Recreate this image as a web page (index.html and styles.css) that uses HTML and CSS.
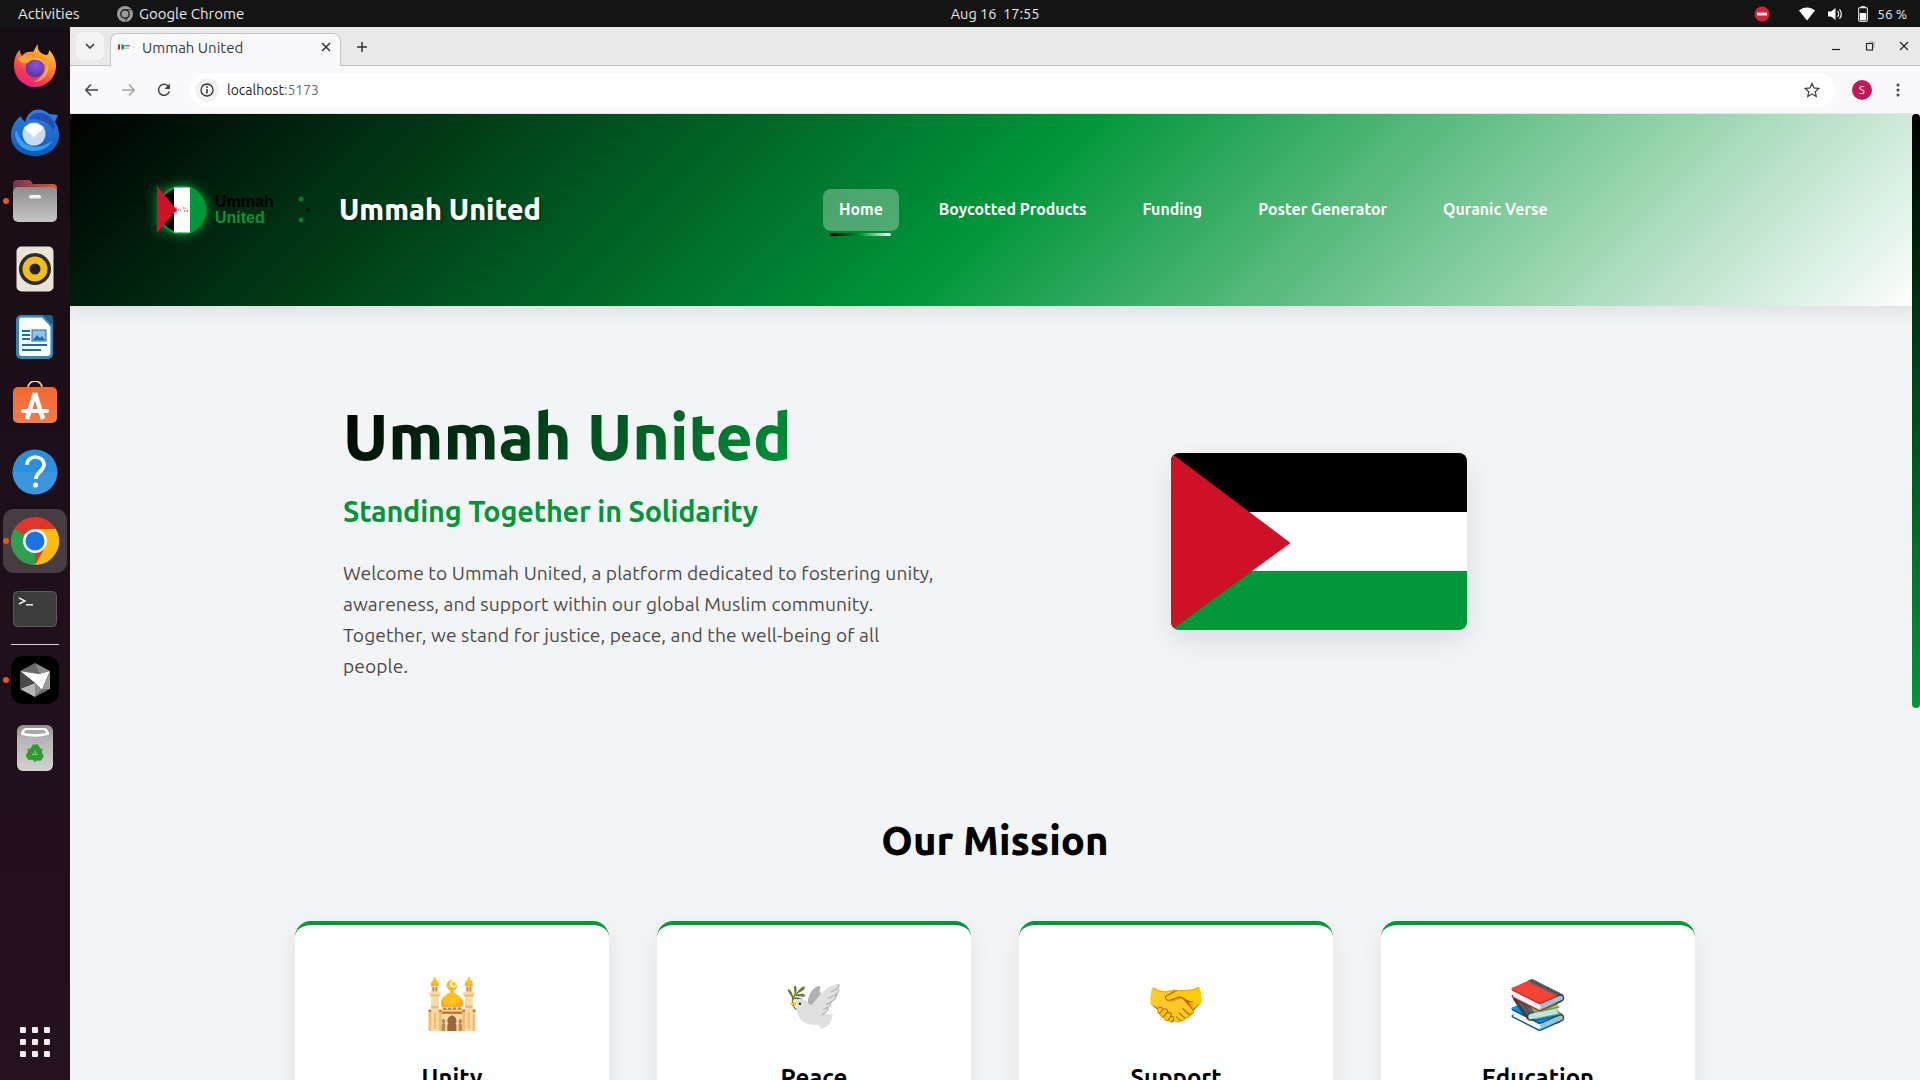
FILE: index.html
```html
<!DOCTYPE html>
<html lang="en">
<head>
<meta charset="utf-8">
<title>Ummah United</title>
<link rel="stylesheet" href="styles.css">
</head>
<body>
<div class="topbar">
  <span class="activities">Activities</span>
  <span class="appname">
    <svg width="16" height="16" viewBox="0 0 16 16"><circle cx="8" cy="8" r="8" fill="#9b9b9b"/><circle cx="8" cy="8" r="4.2" fill="none" stroke="#222" stroke-width="1.4"/><path d="M8 3.8h6.6M11.6 10.4 8 15.8" stroke="#222" stroke-width=".9"/></svg>
    Google Chrome
  </span>
  <span class="clock">Aug 16&nbsp;&nbsp;17:55</span>
  <div class="status">
    <svg class="st-dnd" width="16" height="16" viewBox="0 0 16 16"><circle cx="8" cy="8" r="7.5" fill="#e01b3c"/><rect x="3" y="6.6" width="10" height="2.8" fill="#fff"/></svg>
    <svg class="st-wifi" width="16" height="14" viewBox="0 0 16 14"><path d="M0 3.6C4.5-.6 11.500-.6 16 3.6L8 13.500Z" fill="#fff"/></svg>
    <svg class="st-vol" width="15" height="14" viewBox="0 0 15 14"><path d="M0 4.500h3L7.500 1v12L3 9.500H0Z" fill="#fff"/><path d="M9.500 4.200a4 4 0 0 1 0 5.600M11.500 2.300a7 7 0 0 1 0 9.400" fill="none" stroke="#fff" stroke-width="1.200"/></svg>
    <svg class="st-bat" width="10" height="16" viewBox="0 0 10 16"><rect x=".6" y="1.600" width="8.800" height="13.800" rx="1.500" fill="none" stroke="#ddd" stroke-width="1.100"/><rect x="3" y="0" width="4" height="1.600" fill="#ddd"/><rect x="1.800" y="7" width="6.400" height="7.200" fill="#fff"/></svg>
    <span class="st-text">56 %</span>
  </div>
</div>

<div class="desktop">
  <nav class="dock">
    <div class="dock-item">
      <svg width="42" height="43" viewBox="0 0 42 43">
        <defs>
          <linearGradient id="ff" x1="0.85" y1="0" x2="0.3" y2="1"><stop offset="0" stop-color="#ffe03a"/><stop offset=".4" stop-color="#ff8f2a"/><stop offset=".75" stop-color="#f9394f"/><stop offset="1" stop-color="#e81f86"/></linearGradient>
          <radialGradient id="ffp" cx=".55" cy=".35" r=".8"><stop offset="0" stop-color="#8f55d8"/><stop offset="1" stop-color="#4a2ba0"/></radialGradient>
        </defs>
        <path d="M24 0C23 5 25 8 29 10 34 13 35 9 35 6 39 10 42 15 42 22A21 21 0 0 1 0 22C0 15 2 9 6 6 6 9 7 11 8 12 10 8 15 7 19 8 21 5 22 2 24 0Z" fill="url(#ff)"/>
        <path d="M33 16C38 27 30 39 19 38 28 35 33 27 33 16Z" fill="#ffc24a" opacity=".75"/>
        <circle cx="21" cy="24" r="9.500" fill="url(#ffp)"/>
        <path d="M12 20C15 12 27 11 32 21 27 16 22 15 18 16 16 17 14 18 12 20Z" fill="#ffb13c"/>
        <path d="M4 15C9 10 14 10 19 13 16 15 15 18 12 19 8 20 6 18 4 15Z" fill="#ffa436"/>
      </svg>
    </div>
    <div class="dock-item">
      <svg width="50" height="48" viewBox="0 0 50 48">
        <defs><linearGradient id="tb" x1="0" y1="0" x2="0" y2="1"><stop offset="0" stop-color="#2f7fe0"/><stop offset="1" stop-color="#0a5cbc"/></linearGradient></defs>
        <path d="M11 7C3 13 1 20 1 27c0 11 10 20 24 20s24-9 24-21c0-5-1-9-4-13l3-7-9-1C34 0 26-1 21 3c-3 2-5 6-6 10C13 11 11 9 11 7Z" fill="url(#tb)"/>
        <path d="M19 11c1-5 7-8 13-7 6 1 10 5 12 10 1 3 1 6 0 9-3-7-9-11-15-12-4-1-7-1-10 0Z" fill="#2350b5"/>
        <path d="M5 24c0 10 8 18 19 18 8 0 15-4 19-11-7 6-15 8-22 6-7-2-12-7-14-15-1 0-2 1-2 2Z" fill="#3e9cf0"/>
        <circle cx="24" cy="25" r="11.500" fill="#c6daf3"/>
        <path d="M14 19c5-5.500 15-5.500 20 0L24 28Z" fill="#fff"/>
      </svg>
    </div>
    <div class="dock-item running">
      <svg width="46" height="42" viewBox="0 0 46 42">
        <defs>
          <linearGradient id="fold" x1="0" y1="0" x2="1" y2="0"><stop offset="0" stop-color="#7b2f55"/><stop offset="1" stop-color="#e95420"/></linearGradient>
          <linearGradient id="foldb" x1="0" y1="0" x2="0" y2="1"><stop offset="0" stop-color="#8e8e8e"/><stop offset="1" stop-color="#c6c6c6"/></linearGradient>
        </defs>
        <path d="M1 4a4 4 0 0 1 4-4h11a4 4 0 0 1 4 3l1 1h20a4 4 0 0 1 4 4v8H1Z" fill="url(#fold)"/>
        <rect x="1" y="7" width="44" height="35" rx="5" fill="url(#foldb)"/>
        <rect x="17" y="15" width="12" height="3.500" rx="1.500" fill="#f2f2f2"/>
      </svg>
    </div>
    <div class="dock-item">
      <svg width="38" height="46" viewBox="0 0 38 46">
        <rect x=".5" y=".5" width="37" height="45" rx="5" fill="#e8e4d8"/>
        <circle cx="19" cy="23" r="16" fill="#2c2c2c"/>
        <circle cx="19" cy="23" r="12.500" fill="#f2bd1d"/>
        <circle cx="19" cy="23" r="5.500" fill="#222"/>
      </svg>
    </div>
    <div class="dock-item">
      <svg width="38" height="46" viewBox="0 0 38 46">
        <path d="M5 1h22l10 10v29a5 5 0 0 1-5 5H5a5 5 0 0 1-5-5V6a5 5 0 0 1 5-5Z" fill="#2f87b5"/>
        <path d="M5 3.500h21l8.500 9V39a3 3 0 0 1-3 3H6a3 3 0 0 1-3-3V6a2.500 2.500 0 0 1 2-2.500Z" fill="#fff"/>
        <path d="M27 1h7a3 3 0 0 1 3 3v7Z" fill="#1a5f8f"/>
        <rect x="6" y="16" width="8" height="2" fill="#1a6ea8"/><rect x="6" y="20" width="8" height="2" fill="#1a6ea8"/><rect x="6" y="24" width="8" height="2" fill="#1a6ea8"/>
        <rect x="16" y="16" width="14" height="11" fill="#8cc4e8" stroke="#1a6ea8"/>
        <path d="M17 26l4-5 3 3 2-2 3 4Z" fill="#1a6ea8"/>
        <rect x="6" y="30" width="25" height="2" fill="#1a6ea8"/><rect x="6" y="35" width="19" height="2" fill="#1a6ea8"/>
      </svg>
    </div>
    <div class="dock-item">
      <svg class="icon-store" width="44" height="42" viewBox="0 0 44 42">
        <defs><linearGradient id="store" x1="0" y1="0" x2="0" y2="1"><stop offset="0" stop-color="#f4682e"/><stop offset="1" stop-color="#ee7d4b"/></linearGradient></defs>
        <path d="M15 7c0-9 14-9 14 0" fill="none" stroke="#f5d9a8" stroke-width="1.600"/>
        <rect x="0" y="6" width="44" height="36" rx="5" fill="url(#store)"/>
        <path d="M22 12 14 38M22 12l8 26" stroke="#fff" stroke-width="4.500" fill="none"/>
        <rect x="8" y="28" width="28" height="4" rx="2" fill="#fff"/>
      </svg>
    </div>
    <div class="dock-item">
      <svg class="icon-help" width="46" height="46" viewBox="0 0 46 46">
        <circle cx="23" cy="23" r="22.500" fill="#2b8fdc"/>
        <path d="M.5 23h45a22.500 22.500 0 0 1-45 0Z" fill="#4a9fe0" opacity=".5"/>
        <path d="M15 16c0-5 4-8 8-8 5 0 9 3 9 8 0 6-8 7-8 14" fill="none" stroke="#fff" stroke-width="3.600"/>
        <circle cx="23.500" cy="36" r="2.600" fill="#fff"/>
      </svg>
    </div>
    <div class="dock-item active running">
      <svg width="48" height="48" viewBox="0 0 48 48">
        <circle cx="24" cy="24" r="24" fill="#e0352b"/>
        <path d="M24 48A24 24 0 0 1 3.200 36L13.600 18 24 36Z" fill="#2da14d"/>
        <path d="M3.200 36A24 24 0 0 1 3.200 12L13.600 18 24 36Z" fill="#2da14d"/>
        <path d="M24 12h20.800A24 24 0 0 1 24 48L34.400 30Z" fill="#fbbc0e"/>
        <circle cx="24" cy="24" r="12" fill="#fff"/>
        <circle cx="24" cy="24" r="9.500" fill="#1a73e8"/>
      </svg>
    </div>
    <div class="dock-item">
      <svg width="44" height="36" viewBox="0 0 44 36">
        <rect x=".5" y=".5" width="43" height="35" rx="4" fill="#3c3c3c" stroke="#5a5a5a"/>
        <path d="M6 7l6 3-6 3" fill="none" stroke="#eee" stroke-width="1.400"/>
        <rect x="13" y="13" width="7" height="1.500" fill="#eee"/>
      </svg>
    </div>
    <div class="dock-sep"></div>
    <div class="dock-item running">
      <svg width="48" height="48" viewBox="0 0 48 48">
        <rect width="48" height="48" rx="12" fill="#000"/>
        <path d="M24 7 9 15l19 3Z" fill="#6a6a6a"/>
        <path d="M24 7l15 8-11 3Z" fill="#8a8a8a"/>
        <path d="M9 15l19 3 11-3-8 19-7-7Z" fill="#fff"/>
        <path d="M9 15l15 12-15 6Z" fill="#4a4a4a"/>
        <path d="M9 33l15-6v14Z" fill="#b5b5b5"/>
        <path d="M24 27l7 7-7 7Z" fill="#8c8c8c"/>
        <path d="M31 34l8-1-15 8Z" fill="#6d6d6d"/>
        <path d="M39 15v18l-8 1Z" fill="#9a9a9a"/>
      </svg>
    </div>
    <div class="dock-item">
      <svg width="36" height="46" viewBox="0 0 36 46">
        <defs><linearGradient id="bin" x1="0" y1="0" x2="0" y2="1"><stop offset="0" stop-color="#8f8f8f"/><stop offset=".3" stop-color="#b5b5b5"/><stop offset="1" stop-color="#d2d2d2"/></linearGradient></defs>
        <rect x="0" y="0" width="36" height="46" rx="6" fill="url(#bin)"/>
        <path d="M4 9.500C4 6 6 3 9 3h18c3 0 5 3 5 6.500-9 3-19 3-28 0Z" fill="#fff"/>
        <path d="M7 8C7 6.500 8 5 10 5h16c2 0 3 1.500 3 3-7 1.500-15 1.500-22 0Z" fill="#a8a8a8"/>
        <g fill="#2f9a2f">
          <path d="M12 26 16 19.500h5L24 24.500l2-1-2.500 6-6-.5 2-1-1.500-3-2 3.500Z"/>
          <path d="M12 26 16 19.500h5L24 24.500l2-1-2.500 6-6-.5 2-1-1.500-3-2 3.500Z" transform="rotate(120 18 28.500)"/>
          <path d="M12 26 16 19.500h5L24 24.500l2-1-2.500 6-6-.5 2-1-1.500-3-2 3.500Z" transform="rotate(240 18 28.500)"/>
        </g>
      </svg>
    </div>
    <div class="dock-grid">
      <i></i><i></i><i></i><i></i><i></i><i></i><i></i><i></i><i></i>
    </div>
  </nav>

  <div class="browser">
    <div class="tabstrip">
      <div class="tablist">
        <svg width="10" height="6" viewBox="0 0 10 6"><path d="M1 1l4 4 4-4" fill="none" stroke="#333" stroke-width="1.500"/></svg>
      </div>
      <div class="tab">
        <svg class="favicon" width="16" height="8" viewBox="0 0 16 8"><circle cx="3" cy="4" r="3" fill="#009639"/><path d="M0 1l2.500 3L0 7Z" fill="#ce1126"/><rect x="2" y="1" width="1.500" height="6" fill="#fff"/><rect x="6" y="2" width="6" height="1.500" fill="#888"/><rect x="6" y="4.500" width="5" height="1.500" fill="#a5d4b6"/><circle cx="15" cy="4" r=".8" fill="#ccc"/></svg>
        <span class="tab-title">Ummah United</span>
        <svg class="tab-close" width="10" height="10" viewBox="0 0 10 10"><path d="M1 1l8 8M9 1l-8 8" stroke="#333" stroke-width="1.500"/></svg>
      </div>
      <svg class="newtab" width="12" height="12" viewBox="0 0 12 12"><path d="M6 1v10M1 6h10" stroke="#333" stroke-width="1.500"/></svg>
      <div class="winctl">
        <svg width="10" height="10" viewBox="0 0 10 10"><path d="M1 8.500h8" stroke="#222" stroke-width="1.200"/></svg>
        <svg width="10" height="10" viewBox="0 0 10 10"><rect x="1.500" y="2.500" width="6" height="6.500" fill="none" stroke="#222" stroke-width="1.100"/><path d="M4 1h5v6" fill="none" stroke="#888" stroke-width=".8"/></svg>
        <svg width="10" height="10" viewBox="0 0 10 10"><path d="M1 1l8 8M9 1l-8 8" stroke="#222" stroke-width="1.200"/></svg>
      </div>
    </div>
    <div class="toolbar">
      <svg class="tb-back" width="16" height="14" viewBox="0 0 16 14"><path d="M14 7H2M7 1.500 1.800 7 7 12.500" fill="none" stroke="#444" stroke-width="1.500"/></svg>
      <svg class="tb-fwd" width="16" height="14" viewBox="0 0 16 14"><path d="M2 7h12M9 1.500 14.200 7 9 12.500" fill="none" stroke="#a4a4a4" stroke-width="1.500"/></svg>
      <svg class="tb-reload" width="14" height="14" viewBox="0 0 14 14"><path d="M12.300 8.500A5.500 5.500 0 1 1 11 3L12.500 5" fill="none" stroke="#444" stroke-width="1.500"/><path d="M13 .5V6H7.500Z" fill="#444"/></svg>
      <div class="omnibox">
        <span class="info">
          <svg width="14" height="14" viewBox="0 0 14 14"><circle cx="7" cy="7" r="6" fill="none" stroke="#333" stroke-width="1.300"/><path d="M7 6v4.500" stroke="#333" stroke-width="1.500"/><circle cx="7" cy="4" r=".9" fill="#333"/></svg>
        </span>
        <span class="url">localhost<span class="port">:5173</span></span>
        <svg class="star" width="16" height="16" viewBox="0 0 16 16"><path d="M8 1.500l2 4.500 4.800.5-3.600 3.200 1 4.800L8 12l-4.200 2.500 1-4.800L1.200 6.500 6 6Z" fill="none" stroke="#444" stroke-width="1.300"/></svg>
      </div>
      <span class="avatar">S</span>
      <svg class="kebab" width="4" height="14" viewBox="0 0 4 14"><circle cx="2" cy="2" r="1.500" fill="#444"/><circle cx="2" cy="7" r="1.500" fill="#444"/><circle cx="2" cy="12" r="1.500" fill="#444"/></svg>
    </div>

    <div class="viewport">
      <header class="site-header">
        <svg class="logo" width="118" height="52" viewBox="0 0 118 52">
          <g class="logo-mark">
            <circle cx="26" cy="26" r="24.500" fill="#009639"/>
            <path d="M26 3.500a22.500 22.500 0 0 0 0 45Z" fill="#000"/>
            <rect x="18" y="3.500" width="16" height="45" fill="#fff"/>
            <path d="M1 2 21 26 1 49Z" fill="#ce1126"/>
            <path d="M17 24h5M19 26h6M17 28h4M27 24h3M28 27h4" stroke="#ce1126" stroke-width="1" stroke-dasharray="1.500 1"/>
          </g>
          <text x="59" y="23" class="logo-a">Ummah</text>
          <text x="59" y="39" class="logo-b">United</text>
        </svg>
        <svg class="logo-dots" width="14" height="28" viewBox="0 0 14 28"><circle cx="3" cy="3" r="2.500" fill="#00802f"/><circle cx="10" cy="14" r="2" fill="#041a0b"/><circle cx="3" cy="24" r="2.500" fill="#00802f"/></svg>
        <h1 class="brand">Ummah United</h1>
        <ul class="nav">
          <li class="nav-item is-active"><a>Home</a></li>
          <li class="nav-item"><a>Boycotted Products</a></li>
          <li class="nav-item"><a>Funding</a></li>
          <li class="nav-item"><a>Poster Generator</a></li>
          <li class="nav-item"><a>Quranic Verse</a></li>
        </ul>
      </header>

      <main>
        <section class="hero">
          <div class="hero-text">
            <h1 class="hero-title">Ummah United</h1>
            <h2 class="hero-sub">Standing Together in Solidarity</h2>
            <p class="hero-copy">Welcome to Ummah United, a platform dedicated to fostering unity, awareness, and support within our global Muslim community. Together, we stand for justice, peace, and the well-being of all people.</p>
          </div>
          <div class="hero-flag">
            <svg class="flag" width="296" height="177" viewBox="0 0 296 177">
              <rect width="296" height="59" fill="#000"/>
              <rect y="59" width="296" height="59" fill="#fff"/>
              <rect y="118" width="296" height="59" fill="#009639"/>
              <path d="M0 0 119.500 90 0 177Z" fill="#ce1126"/>
            </svg>
          </div>
        </section>

        <section class="mission">
          <h2 class="mission-title">Our Mission</h2>
          <div class="cards">
            <article class="card"><div class="card-icon">🕌</div><h3 class="card-title">Unity</h3></article>
            <article class="card"><div class="card-icon">🕊️</div><h3 class="card-title">Peace</h3></article>
            <article class="card"><div class="card-icon">🤝</div><h3 class="card-title">Support</h3></article>
            <article class="card"><div class="card-icon">📚</div><h3 class="card-title">Education</h3></article>
          </div>
        </section>
      </main>
      <div class="scroll-thumb"></div>
    </div>
  </div>
</div>
</body>
</html>
```
FILE: styles.css
```css
* { box-sizing: border-box; }
html, body { margin: 0; height: 100%; overflow: hidden; }
body {
  width: 1920px; height: 1080px;
  font-family: "Ubuntu", "Noto Sans", "Open Sans", sans-serif;
  display: flex; flex-direction: column; background: #f3f4f6;
}
h1, h2, h3, p, ul { margin: 0; padding: 0; }
svg { display: block; flex: none; }

/* GNOME top bar */
.topbar {
  height: 27px; flex: none; background: #141414; color: #eaeaea;
  display: flex; align-items: center; position: relative;
  font-size: 15px; padding-left: 18px;
}
.activities { width: 99px; }
.appname { display: flex; align-items: center; gap: 6px; }
.clock { position: absolute; left: 937px; width: 116px; text-align: center; font-size: 14.5px; }
.status { margin-left: auto; display: flex; align-items: center; padding-right: 13px; }
.st-dnd { margin-right: 29px; }
.st-wifi { margin-right: 12.5px; }
.st-vol { margin-right: 15.5px; }
.st-bat { margin-right: 9px; }
.st-text { font-size: 13.5px; }

.desktop { flex: 1; display: flex; min-height: 0; }

/* dock */
.dock {
  width: 70px; flex: none; padding-top: 4px;
  background: linear-gradient(180deg, #170d15, #25121f);
  display: flex; flex-direction: column; align-items: stretch;
}
.dock-item {
  height: 68px; flex: none; position: relative;
  display: flex; align-items: center; justify-content: center;
}
.dock-item.running::before {
  content: ""; position: absolute; left: 3px; top: 50%; margin-top: -3px;
  width: 6px; height: 6px; border-radius: 50%; background: #e95420; z-index: 2;
}
.dock-item.active::after {
  content: ""; position: absolute; inset: 2px 3px; border-radius: 11px;
  background: #453d42; z-index: 0;
}
.dock-item.active svg { position: relative; z-index: 1; }
.icon-store { margin-bottom: 6px; }
.icon-help { margin-bottom: 2px; }
.dock-sep { height: 1px; margin: 1px 11px 1px; background: #d6d2d4; flex: none; }
.dock-grid {
  margin: auto auto 23px; width: 30px;
  display: grid; grid-template-columns: repeat(3, 6px); gap: 6px;
}
.dock-grid i { width: 6px; height: 6px; background: #f0f0f0; border-radius: 1px; display: block; }

/* chrome */
.browser { flex: 1; display: flex; flex-direction: column; min-width: 0; }
.tabstrip {
  height: 39px; flex: none; background: #e9e9e9; border-bottom: 1px solid #bdbdbd;
  display: flex; align-items: flex-end; padding-left: 6px;
}
.tablist {
  width: 28px; height: 28px; margin-bottom: 5px; background: #f4f4f4; border-radius: 8px;
  display: flex; align-items: center; justify-content: center;
}
.tab {
  width: 231px; height: 33px; margin: 0 0 -1px 6px; background: #f9f9fb;
  border: 1px solid #c6c6c6; border-bottom: 0; border-radius: 8px 8px 0 0;
  display: flex; align-items: center; padding: 0 9px 6px 7px;
  color: #3a3a3a; font-size: 15px;
}
.tab-title { margin-left: 8px; }
.tab-close { margin-left: auto; }
.newtab { margin: 0 0 12px 15px; }
.winctl { margin: 0 11px 14px auto; display: flex; gap: 24px; }

.toolbar {
  height: 48px; flex: none; background: #f9f9fb; display: flex; align-items: center;
  padding-left: 14px; border-bottom: 1px solid #e6e6e6;
}
.tb-fwd { margin-left: 20px; }
.tb-reload { margin-left: 21px; }
.omnibox {
  margin-left: 19px; width: 1645px; height: 34px; background: #fff; border-radius: 17px;
  display: flex; align-items: center; padding-left: 5px; padding-right: 15px;
}
.info {
  width: 24px; height: 24px; border-radius: 50%; background: #f3f3f3; flex: none;
  display: flex; align-items: center; justify-content: center;
}
.url { margin-left: 8px; font-size: 14px; color: #1f1f1f; }
.port { color: #6b6b6b; }
.star { margin-left: auto; }
.avatar {
  margin-left: 17px; width: 20px; height: 20px; border-radius: 50%; background: #c2185b;
  color: #fff; font-size: 11px; display: flex; align-items: center; justify-content: center; flex: none;
}
.kebab { margin-left: 24px; }

/* page */
.viewport { flex: 1; min-height: 0; position: relative; overflow: hidden; background: #f3f4f6; }
.scroll-thumb {
  position: absolute; right: 0; top: 0; width: 8px; height: 594px; border-radius: 4px;
  background: linear-gradient(180deg, #000, #009639);
}
.site-header {
  height: 192px; display: flex; align-items: center; padding-left: 86px;
  background: linear-gradient(135deg, #000 0%, #009639 50%, #fff 100%);
  box-shadow: 0 4px 20px rgba(0, 0, 0, .1);
  position: relative;
}
.logo { overflow: visible; }
.logo-mark { filter: drop-shadow(0 0 6px rgba(0, 200, 80, .7)); }
.logo-a, .logo-b { font-family: "Liberation Sans", Arial, sans-serif; font-weight: 700; font-size: 16px; }
.logo-a { fill: #000; }
.logo-b { fill: #009639; }
.logo-dots { margin-left: 24px; margin-right: 27px; }
.brand {
  font-size: 28.8px; font-weight: 800; color: #fff; line-height: 40px; width: 484px; margin-bottom: 2px;
  text-shadow: 2px 2px 4px rgba(0, 0, 0, .3); white-space: nowrap;
}
.nav { list-style: none; display: flex; gap: 24px; }
.nav-item { position: relative; height: 42px; }
.nav-item a {
  display: block; padding: 0 16px; font-size: 15.85px; font-weight: 600; line-height: 41px; height: 42px;
  color: #fff; border-radius: 8px; white-space: nowrap;
}
.nav-item.is-active a { background: rgba(255, 255, 255, .3); }
.nav-item.is-active::after {
  content: ""; position: absolute; left: 7px; right: 8px; bottom: -5px; height: 3px; border-radius: 2px;
  background: linear-gradient(90deg, #000, #009639, #fff);
}

.hero {
  padding: 92px 0 0 273px; display: grid; grid-template-columns: 600px 592px; column-gap: 80px;
  align-items: center;
}
.hero-title {
  font-size: 64px; line-height: 77px; font-weight: 800; white-space: nowrap;
  background: linear-gradient(135deg, #000 0%, #009639 100%);
  -webkit-background-clip: text; background-clip: text; color: transparent;
  width: 447px;
}
.hero-sub { margin-top: 16px; font-size: 28.8px; line-height: 40px; font-weight: 600; letter-spacing: -.17px; color: #009639; white-space: nowrap; }
.hero-copy { margin-top: 27px; font-size: 19.2px; line-height: 31px; letter-spacing: .08px; color: #4b4b4b; }
.hero-flag { display: flex; justify-content: center; padding-top: 3px; }
.flag { border-radius: 8px; box-shadow: 0 10px 30px rgba(0, 0, 0, .1); }

.mission { padding-top: 135px; }
.mission-title { text-align: center; font-size: 40px; line-height: 48px; font-weight: 800; color: #000; }
.cards {
  margin: 56px auto 0; width: 1400px; display: grid; grid-template-columns: repeat(4, 1fr); gap: 48px;
}
.card {
  height: 400px; background: #fff; border-top: 4px solid #009639; border-radius: 16px;
  box-shadow: 0 8px 25px rgba(0, 0, 0, .08); text-align: center; padding-top: 44px;
}
.card-icon { font-family: "Noto Color Emoji", sans-serif; font-size: 48px; line-height: 72px; }
.card-title { margin-top: 22px; font-size: 24px; line-height: 30px; font-weight: 700; color: #000; }
```
